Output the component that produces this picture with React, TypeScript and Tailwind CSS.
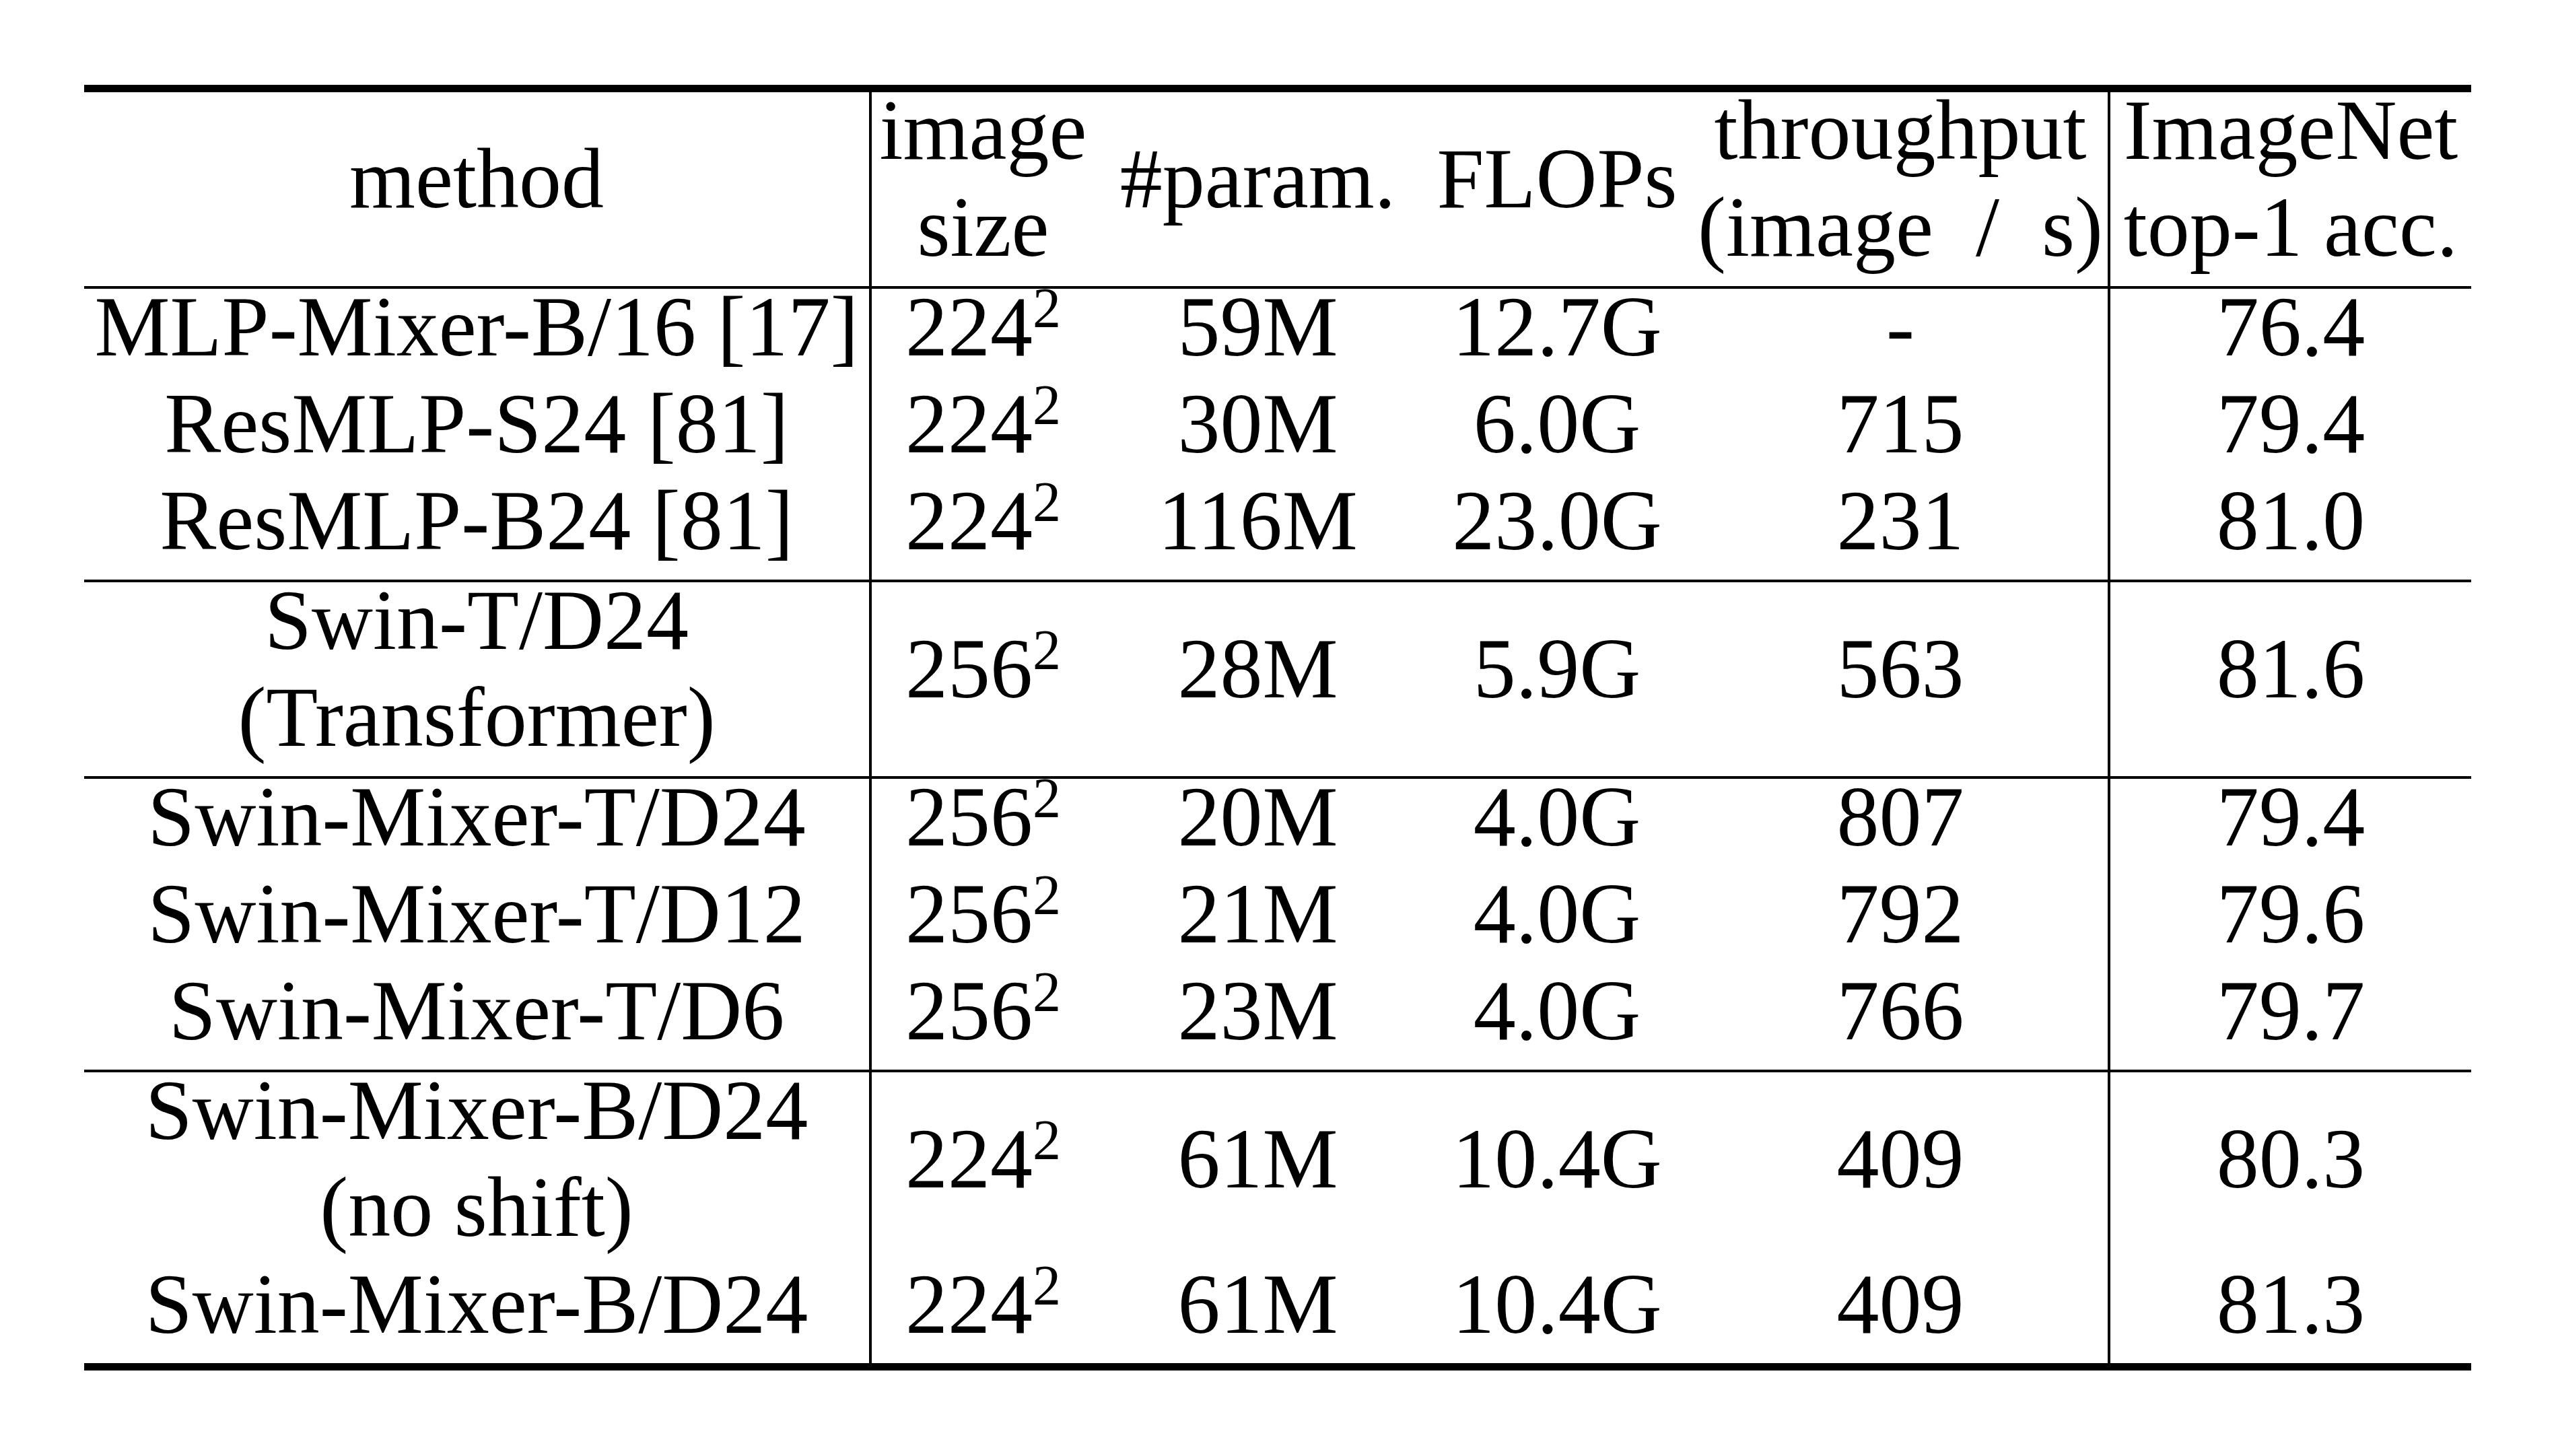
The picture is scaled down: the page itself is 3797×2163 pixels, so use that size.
import clsx from "clsx"
import type { ReactNode } from "react"

type Cell = { lines: ReactNode[]; span?: 1 | 2 }

// widths of the six columns, vertical rules sit on the right of col 1 and col 5
const COLS = "grid grid-cols-[1170px_331px_485px_404px_620px_536px]"

function Line({ children }: { children: ReactNode }) {
  return <div className="h-[144px] leading-[113px] whitespace-nowrap text-center">{children}</div>
}

function Sq({ base }: { base: string }) {
  return (
    <span>
      {base}
      <sup className="text-[84px]">2</sup>
    </span>
  )
}

function Section({ rows, cols }: { rows: 2 | 3; cols: Cell[][] }) {
  return (
    <div
      className={clsx(
        COLS,
        "grid-flow-col",
        rows === 2 ? "grid-rows-[144px_144px]" : "grid-rows-[144px_144px_144px]"
      )}
    >
      {cols.map((col, ci) =>
        col.map((cell, i) => (
          <div
            key={`${ci}-${i}`}
            className={clsx(
              "flex flex-col items-center justify-center",
              cell.span === 2 && "row-span-2",
              (ci === 0 || ci === 4) && "border-r-4 border-black"
            )}
          >
            {cell.lines.map((l, j) => (
              <Line key={j}>{l}</Line>
            ))}
          </div>
        ))
      )}
    </div>
  )
}

const one = (...items: ReactNode[]): Cell[] => items.map((x) => ({ lines: [x] }))

const header: Cell[][] = [
  [{ lines: ["method"], span: 2 }],
  [{ lines: ["image", "size"], span: 2 }],
  [{ lines: ["#param."], span: 2 }],
  [{ lines: ["FLOPs"], span: 2 }],
  [{ lines: ["throughput", "(image\u2002/\u2002s)"], span: 2 }],
  [{ lines: ["ImageNet", "top-1 acc."], span: 2 }],
]

const mlp: Cell[][] = [
  one("MLP-Mixer-B/16 [17]", "ResMLP-S24 [81]", "ResMLP-B24 [81]"),
  one(<Sq base="224" />, <Sq base="224" />, <Sq base="224" />),
  one("59M", "30M", "116M"),
  one("12.7G", "6.0G", "23.0G"),
  one("-", "715", "231"),
  one("76.4", "79.4", "81.0"),
]

const swin: Cell[][] = [
  [{ lines: ["Swin-T/D24", "(Transformer)"], span: 2 }],
  [{ lines: [<Sq base="256" />], span: 2 }],
  [{ lines: ["28M"], span: 2 }],
  [{ lines: ["5.9G"], span: 2 }],
  [{ lines: ["563"], span: 2 }],
  [{ lines: ["81.6"], span: 2 }],
]

const mixerT: Cell[][] = [
  one("Swin-Mixer-T/D24", "Swin-Mixer-T/D12", "Swin-Mixer-T/D6"),
  one(<Sq base="256" />, <Sq base="256" />, <Sq base="256" />),
  one("20M", "21M", "23M"),
  one("4.0G", "4.0G", "4.0G"),
  one("807", "792", "766"),
  one("79.4", "79.6", "79.7"),
]

const mixerB: Cell[][] = [
  [{ lines: ["Swin-Mixer-B/D24", "(no shift)"], span: 2 }, { lines: ["Swin-Mixer-B/D24"] }],
  [{ lines: [<Sq base="224" />], span: 2 }, { lines: [<Sq base="224" />] }],
  [{ lines: ["61M"], span: 2 }, { lines: ["61M"] }],
  [{ lines: ["10.4G"], span: 2 }, { lines: ["10.4G"] }],
  [{ lines: ["409"], span: 2 }, { lines: ["409"] }],
  [{ lines: ["80.3"], span: 2 }, { lines: ["81.3"] }],
]

export default function App() {
  return (
    <div className="w-[3797px] h-[2163px] bg-white pt-[126px] pl-[125px] text-black font-['Liberation_Serif',serif] text-[126px]">
      <div className="w-[3546px] flex flex-col">
        <div className="h-[11px] bg-black" />
        <Section rows={2} cols={header} />
        <div className="h-[4px] bg-black" />
        <Section rows={3} cols={mlp} />
        <div className="h-[4px] bg-black" />
        <Section rows={2} cols={swin} />
        <div className="h-[4px] bg-black" />
        <Section rows={3} cols={mixerT} />
        <div className="h-[4px] bg-black" />
        <Section rows={3} cols={mixerB} />
        <div className="h-[11px] bg-black" />
      </div>
    </div>
  )
}
